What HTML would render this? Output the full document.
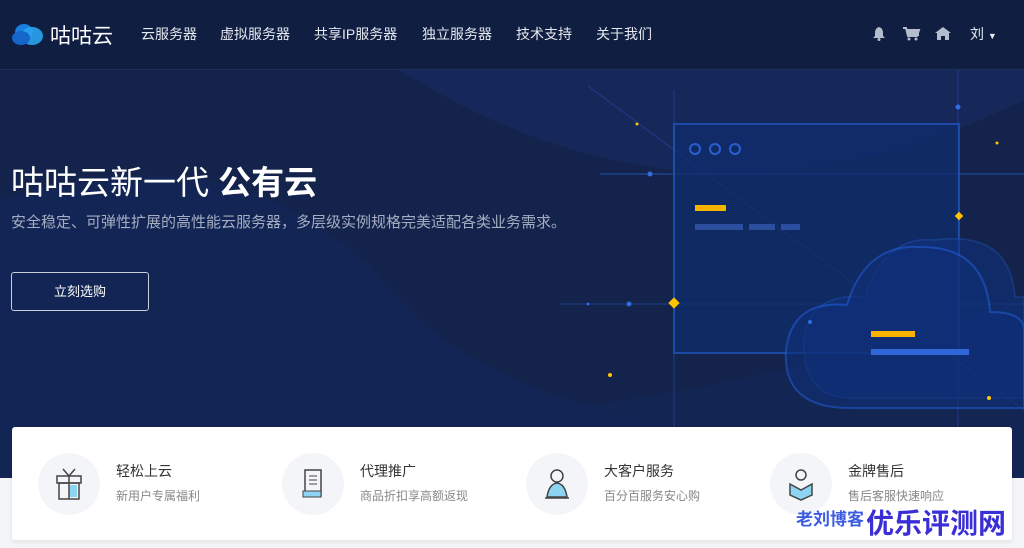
<!DOCTYPE html>
<html><head><meta charset="utf-8"><style>
*{margin:0;padding:0;box-sizing:border-box}
body{width:1024px;height:548px;overflow:hidden;background:#f4f5f7;font-family:"Liberation Sans","Noto Sans CJK SC",sans-serif;position:relative}
#hero{position:absolute;left:0;top:0;width:1024px;height:478px;background:#13234b;overflow:hidden}
.nav{position:absolute;top:0;left:0;width:1024px;height:70px;background:#0f1e41;border-bottom:1px solid #1e3060}
.nav a{position:absolute;top:24px;color:#e6e9f0;font-size:14px;text-decoration:none}
.card{position:absolute;left:12px;top:427px;width:1000px;height:113px;background:#fff;border-radius:3px;box-shadow:0 2px 6px rgba(0,0,0,.08)}
.it{position:absolute;top:26px}
.ic{position:absolute;left:0;top:0;width:62px;height:62px;border-radius:50%;background:#f3f5f8}
.t1{position:absolute;left:78px;top:8px;font-size:14px;color:#333;white-space:nowrap}
.t2{position:absolute;left:78px;top:34px;font-size:12px;color:#888;white-space:nowrap}
</style></head><body>
<div id="hero">
<svg width="1024" height="478" style="position:absolute;left:0;top:0">
<path d="M0 200 Q250 120 400 300 Q520 440 1024 478 L0 478Z" fill="#13275a" opacity=".6"/>
<path d="M400 70 Q700 260 1024 100 L1024 70Z" fill="#172b60" opacity=".7"/>
<path d="M0 400 Q500 480 1024 300 L1024 478 L0 478Z" fill="#142656" opacity=".6"/>
<line x1="588" y1="86" x2="1024" y2="410" stroke="#1f3c86" stroke-width="1"/>
<line x1="600" y1="174" x2="1024" y2="174" stroke="#2450b0" stroke-width="1"/>
<line x1="560" y1="304" x2="1024" y2="304" stroke="#1e3d8a" stroke-width="1"/>
<line x1="674" y1="90" x2="674" y2="478" stroke="#1e3d8a"/>
<line x1="958" y1="70" x2="958" y2="478" stroke="#1e3d8a"/>
<rect x="674" y="124" width="285" height="229" fill="#0f2d6e" opacity=".7" stroke="#1f5ac8" stroke-width="2"/>
<circle cx="695" cy="149" r="5" fill="none" stroke="#2b5fd0" stroke-width="2"/>
<circle cx="715" cy="149" r="5" fill="none" stroke="#2b5fd0" stroke-width="2"/>
<circle cx="735" cy="149" r="5" fill="none" stroke="#2b5fd0" stroke-width="2"/>
<rect x="695" y="205" width="31" height="6" fill="#f8b300"/>
<rect x="695" y="224" width="48" height="6" fill="#2b4f9e"/>
<rect x="749" y="224" width="26" height="6" fill="#2b4f9e"/>
<rect x="781" y="224" width="19" height="6" fill="#2b4f9e"/>
<path d="M852 398 Q802 398 804 340 Q810 292 865 297 Q885 235 935 240 Q1010 230 1015 297 L1024 297 L1024 398Z" fill="#113381" opacity=".55" stroke="#1d4fb0" stroke-width="1.5"/>
<path d="M850 408 Q782 408 786 350 Q792 300 847 305 Q865 245 918 247 Q985 245 990 312 Q1024 312 1024 330 L1024 408Z" fill="#0f2f78" opacity=".6" stroke="#1f5ad0" stroke-width="2"/>
<rect x="871" y="331" width="44" height="6" fill="#f8b300"/>
<rect x="871" y="349" width="98" height="6" fill="#2f66d8"/>
<g fill="#ffc400"><rect x="670" y="299" width="8" height="8" transform="rotate(45 674 303)"/><rect x="956" y="213" width="6" height="6" transform="rotate(45 959 216)"/><circle cx="637" cy="124" r="1.5"/><circle cx="997" cy="143" r="1.5"/><circle cx="610" cy="375" r="2"/><circle cx="989" cy="398" r="2"/></g>
<g fill="#2f6de0"><circle cx="650" cy="174" r="2.5"/><circle cx="629" cy="304" r="2.5"/><circle cx="588" cy="304" r="1.5"/><circle cx="958" cy="107" r="2.5"/><circle cx="810" cy="322" r="2"/></g>
</svg>
<div class="nav">
<svg style="position:absolute;left:12px;top:22px" width="32" height="24"><ellipse cx="12" cy="10" rx="9" ry="8" fill="#1a7fe0"/><ellipse cx="20" cy="14" rx="11" ry="9" fill="#2aa3f0" opacity=".9"/><ellipse cx="9" cy="16" rx="9" ry="7" fill="#1466c8"/></svg>
<div style="position:absolute;left:50px;top:20px;color:#fff;font-size:21px">咕咕云</div>
<a style="left:141px">云服务器</a><a style="left:220px">虚拟服务器</a><a style="left:314px">共享IP服务器</a><a style="left:422px">独立服务器</a><a style="left:516px">技术支持</a><a style="left:596px">关于我们</a>
<svg style="position:absolute;left:872px;top:26px" width="80" height="16" fill="#b5bdcc">
<path d="M7 1 Q3 2 3 7 L3 10 L1 12 L13 12 L11 10 L11 7 Q11 2 7 1Z"/><circle cx="7" cy="13.5" r="1.5"/>
<path d="M31 2 L34 2 L36 10 L45 10 L47 4 L35 4" fill="none" stroke="#b5bdcc" stroke-width="2"/><rect x="35" y="4" width="12" height="6"/><circle cx="37" cy="13" r="1.5"/><circle cx="44" cy="13" r="1.5"/>
<path d="M63 7 L71 1 L79 7 L77 7 L77 14 L73 14 L73 10 L69 10 L69 14 L65 14 L65 7Z"/>
</svg>
<div style="position:absolute;left:970px;top:24px;color:#e6e9f0;font-size:14px">刘 <span style="font-size:9px">▼</span></div>
</div>
<div style="position:absolute;left:11px;top:156px;color:#fff;font-size:33px;white-space:nowrap">咕咕云新一代 <b>公有云</b></div>
<div style="position:absolute;left:11px;top:211px;color:#a4adc2;font-size:15px;white-space:nowrap">安全稳定、可弹性扩展的高性能云服务器，多层级实例规格完美适配各类业务需求。</div>
<div style="position:absolute;left:11px;top:272px;width:138px;height:39px;border:1px solid #c9cfdb;border-radius:3px;color:#fff;font-size:13px;text-align:center;line-height:37px">立刻选购</div>
</div>
<div class="card">
<div class="it" style="left:26px"><div class="ic"></div><svg style="position:absolute;left:16px;top:14px" width="30" height="34"><rect x="3" y="9" width="24" height="7" fill="none" stroke="#444" stroke-width="1.5"/><rect x="5" y="16" width="20" height="16" fill="none" stroke="#444" stroke-width="1.5"/><rect x="15" y="18" width="8" height="12" fill="#8dd4f2"/><line x1="15" y1="9" x2="15" y2="32" stroke="#444" stroke-width="1.5"/><path d="M15 9 L9 2 M15 9 L21 2" stroke="#444" stroke-width="1.5"/></svg><div class="t1">轻松上云</div><div class="t2">新用户专属福利</div></div>
<div class="it" style="left:270px"><div class="ic"></div><svg style="position:absolute;left:16px;top:14px" width="30" height="34"><rect x="7" y="3" width="16" height="26" fill="none" stroke="#444" stroke-width="1.5"/><rect x="5" y="24" width="18" height="6" fill="#8dd4f2" stroke="#444"/><path d="M11 9h8M11 13h8M11 17h8" stroke="#444"/></svg><div class="t1">代理推广</div><div class="t2">商品折扣享高额返现</div></div>
<div class="it" style="left:514px"><div class="ic"></div><svg style="position:absolute;left:16px;top:14px" width="30" height="34"><circle cx="15" cy="9" r="6" fill="none" stroke="#444" stroke-width="1.5"/><path d="M5 30 Q7 17 15 16 Q23 17 25 30Z" fill="#8dd4f2" stroke="#444" stroke-width="1.5"/><path d="M3 31h24" stroke="#444" stroke-width="1.5"/></svg><div class="t1">大客户服务</div><div class="t2">百分百服务安心购</div></div>
<div class="it" style="left:758px"><div class="ic"></div><svg style="position:absolute;left:16px;top:14px" width="30" height="34"><circle cx="15" cy="8" r="5" fill="none" stroke="#444" stroke-width="1.5"/><path d="M4 17 L15 23 L26 17 L26 28 L15 33 L4 28Z" fill="#8dd4f2" stroke="#444" stroke-width="1.5"/></svg><div class="t1">金牌售后</div><div class="t2">售后客服快速响应</div></div>
</div>
<div style="position:absolute;left:796px;top:505px;color:#3d5de0;font-size:17px;font-weight:bold;white-space:nowrap">老刘博客</div>
<div style="position:absolute;left:866px;top:502px;color:#3a2fd6;font-size:28px;font-weight:bold;white-space:nowrap;text-shadow:1px 1px 0 #fff">优乐评测网</div>
</body></html>
